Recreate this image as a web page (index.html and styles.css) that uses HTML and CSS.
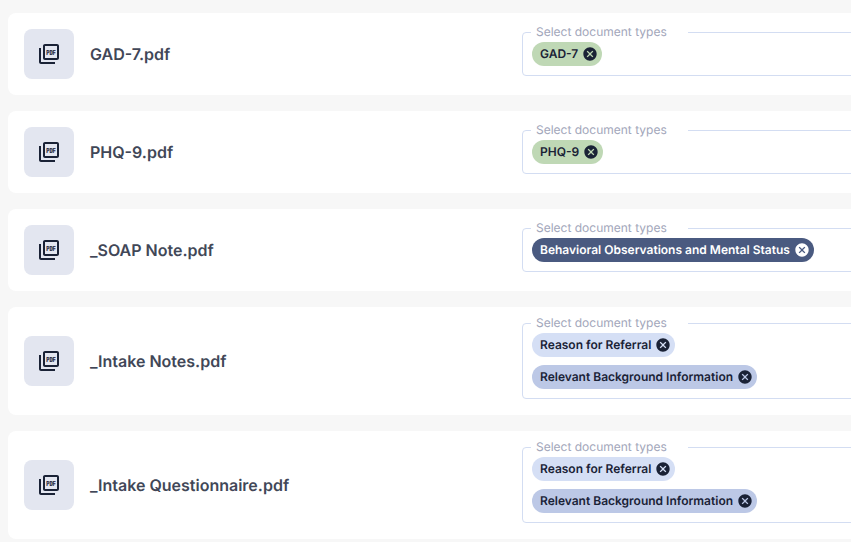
FILE: index.html
```html
<!DOCTYPE html>
<html lang="en">
<head>
  <meta charset="UTF-8" />
  <title>Documents</title>
  <link rel="stylesheet" href="styles.css">
</head>
<body>
  <div class="list">
    <div class="card">
      <div class="tile">
        <svg class="tile-icon" viewBox="0 0 24 24">
          <path d="M20 2H8c-1.1 0-2 .9-2 2v12c0 1.1.9 2 2 2h12c1.1 0 2-.9 2-2V4c0-1.1-.9-2-2-2zm0 14H8V4h12v12zM4 6H2v14c0 1.1.9 2 2 2h14v-2H4V6z" />
          <text x="9.2" y="13" textLength="9.6" lengthAdjust="spacingAndGlyphs" class="pdf-text">PDF</text>
        </svg>
      </div>
      <div class="name">GAD-7.pdf</div>
      <div class="field">
        <span class="field-label">Select document types</span>
        <span class="chip chip-green">GAD-7
          <svg class="chip-x" viewBox="0 0 24 24"><path d="M12 2C6.47 2 2 6.47 2 12s4.47 10 10 10 10-4.47 10-10S17.53 2 12 2zm5 13.59L15.59 17 12 13.41 8.41 17 7 15.59 10.59 12 7 8.41 8.41 7 12 10.59 15.59 7 17 8.41 13.41 12 17 15.59z" /></svg>
        </span>
      </div>
    </div>

    <div class="card">
      <div class="tile">
        <svg class="tile-icon" viewBox="0 0 24 24">
          <path d="M20 2H8c-1.1 0-2 .9-2 2v12c0 1.1.9 2 2 2h12c1.1 0 2-.9 2-2V4c0-1.1-.9-2-2-2zm0 14H8V4h12v12zM4 6H2v14c0 1.1.9 2 2 2h14v-2H4V6z" />
          <text x="9.2" y="13" textLength="9.6" lengthAdjust="spacingAndGlyphs" class="pdf-text">PDF</text>
        </svg>
      </div>
      <div class="name">PHQ-9.pdf</div>
      <div class="field">
        <span class="field-label">Select document types</span>
        <span class="chip chip-green">PHQ-9
          <svg class="chip-x" viewBox="0 0 24 24"><path d="M12 2C6.47 2 2 6.47 2 12s4.47 10 10 10 10-4.47 10-10S17.53 2 12 2zm5 13.59L15.59 17 12 13.41 8.41 17 7 15.59 10.59 12 7 8.41 8.41 7 12 10.59 15.59 7 17 8.41 13.41 12 17 15.59z" /></svg>
        </span>
      </div>
    </div>

    <div class="card">
      <div class="tile">
        <svg class="tile-icon" viewBox="0 0 24 24">
          <path d="M20 2H8c-1.1 0-2 .9-2 2v12c0 1.1.9 2 2 2h12c1.1 0 2-.9 2-2V4c0-1.1-.9-2-2-2zm0 14H8V4h12v12zM4 6H2v14c0 1.1.9 2 2 2h14v-2H4V6z" />
          <text x="9.2" y="13" textLength="9.6" lengthAdjust="spacingAndGlyphs" class="pdf-text">PDF</text>
        </svg>
      </div>
      <div class="name">_SOAP Note.pdf</div>
      <div class="field">
        <span class="field-label">Select document types</span>
        <span class="chip chip-navy">Behavioral Observations and Mental Status
          <svg class="chip-x" viewBox="0 0 24 24"><path d="M12 2C6.47 2 2 6.47 2 12s4.47 10 10 10 10-4.47 10-10S17.53 2 12 2zm5 13.59L15.59 17 12 13.41 8.41 17 7 15.59 10.59 12 7 8.41 8.41 7 12 10.59 15.59 7 17 8.41 13.41 12 17 15.59z" /></svg>
        </span>
      </div>
    </div>

    <div class="card">
      <div class="tile">
        <svg class="tile-icon" viewBox="0 0 24 24">
          <path d="M20 2H8c-1.1 0-2 .9-2 2v12c0 1.1.9 2 2 2h12c1.1 0 2-.9 2-2V4c0-1.1-.9-2-2-2zm0 14H8V4h12v12zM4 6H2v14c0 1.1.9 2 2 2h14v-2H4V6z" />
          <text x="9.2" y="13" textLength="9.6" lengthAdjust="spacingAndGlyphs" class="pdf-text">PDF</text>
        </svg>
      </div>
      <div class="name">_Intake Notes.pdf</div>
      <div class="field">
        <span class="field-label">Select document types</span>
        <span class="chip chip-light">Reason for Referral
          <svg class="chip-x" viewBox="0 0 24 24"><path d="M12 2C6.47 2 2 6.47 2 12s4.47 10 10 10 10-4.47 10-10S17.53 2 12 2zm5 13.59L15.59 17 12 13.41 8.41 17 7 15.59 10.59 12 7 8.41 8.41 7 12 10.59 15.59 7 17 8.41 13.41 12 17 15.59z" /></svg>
        </span>
        <span class="chip chip-mid">Relevant Background Information
          <svg class="chip-x" viewBox="0 0 24 24"><path d="M12 2C6.47 2 2 6.47 2 12s4.47 10 10 10 10-4.47 10-10S17.53 2 12 2zm5 13.59L15.59 17 12 13.41 8.41 17 7 15.59 10.59 12 7 8.41 8.41 7 12 10.59 15.59 7 17 8.41 13.41 12 17 15.59z" /></svg>
        </span>
      </div>
    </div>

    <div class="card">
      <div class="tile">
        <svg class="tile-icon" viewBox="0 0 24 24">
          <path d="M20 2H8c-1.1 0-2 .9-2 2v12c0 1.1.9 2 2 2h12c1.1 0 2-.9 2-2V4c0-1.1-.9-2-2-2zm0 14H8V4h12v12zM4 6H2v14c0 1.1.9 2 2 2h14v-2H4V6z" />
          <text x="9.2" y="13" textLength="9.6" lengthAdjust="spacingAndGlyphs" class="pdf-text">PDF</text>
        </svg>
      </div>
      <div class="name">_Intake Questionnaire.pdf</div>
      <div class="field">
        <span class="field-label">Select document types</span>
        <span class="chip chip-light">Reason for Referral
          <svg class="chip-x" viewBox="0 0 24 24"><path d="M12 2C6.47 2 2 6.47 2 12s4.47 10 10 10 10-4.47 10-10S17.53 2 12 2zm5 13.59L15.59 17 12 13.41 8.41 17 7 15.59 10.59 12 7 8.41 8.41 7 12 10.59 15.59 7 17 8.41 13.41 12 17 15.59z" /></svg>
        </span>
        <span class="chip chip-mid">Relevant Background Information
          <svg class="chip-x" viewBox="0 0 24 24"><path d="M12 2C6.47 2 2 6.47 2 12s4.47 10 10 10 10-4.47 10-10S17.53 2 12 2zm5 13.59L15.59 17 12 13.41 8.41 17 7 15.59 10.59 12 7 8.41 8.41 7 12 10.59 15.59 7 17 8.41 13.41 12 17 15.59z" /></svg>
        </span>
      </div>
    </div>
  </div>
</body>
</html>
```

FILE: styles.css
```css
* {
  box-sizing: border-box;
}

html, body {
  height: 100%;
}

body {
  margin: 0;
  padding: 13px 0 0 8px;
  overflow: hidden;
  background: #f7f7f7;
  font-family: Inter, sans-serif;
  text-rendering: geometricPrecision;
  -webkit-font-smoothing: antialiased;
}

.list {
  display: flex;
  flex-direction: column;
  gap: 16px;
  width: 930px;
}

.card {
  display: flex;
  align-items: center;
  gap: 16px;
  padding: 16px;
  background: #fff;
  border-radius: 8px;
}

.tile {
  display: flex;
  justify-content: center;
  align-items: center;
  width: 50px;
  height: 50px;
  flex: none;
  background: #e3e6f0;
  border-radius: 8px;
}

.tile-icon {
  width: 24px;
  height: 24px;
  fill: #1a2236;
}

.pdf-text {
  font-family: "Liberation Mono", monospace;
  font-size: 7.6px;
  font-weight: 700;
  stroke: #1a2236;
  stroke-width: 0.2;
}

.name {
  flex: 1;
  font-size: 16px;
  font-weight: 600;
  color: #414757;
}

.field {
  position: relative;
  display: flex;
  flex-direction: column;
  align-items: flex-start;
  gap: 8px;
  width: 400px;
  flex: none;
  padding: 9px;
  border: 1px solid #d3ddf2;
  border-radius: 4px;
}

.field-label {
  position: absolute;
  top: -9px;
  left: 8px;
  padding: 0 21px 0 5px;
  background: #fff;
  font-size: 12px;
  line-height: 16px;
  color: #a2a6ba;
}

.chip {
  display: flex;
  align-items: center;
  gap: 4px;
  height: 24px;
  padding: 0 4px 1px 8px;
  border-radius: 12px;
  font-size: 12px;
  font-weight: 600;
  white-space: nowrap;
  color: #1a2236;
}

.chip-x {
  width: 16px;
  height: 16px;
  margin-top: 1px;
  fill: #1a2236;
}

.chip-green {
  background: #bfd8b5;
}

.chip-navy {
  background: #4a5a80;
  color: #fff;
}

.chip-navy .chip-x {
  fill: #fff;
}

.chip-light {
  background: #d5dff5;
}

.chip-mid {
  background: #bcc8e6;
}
```
